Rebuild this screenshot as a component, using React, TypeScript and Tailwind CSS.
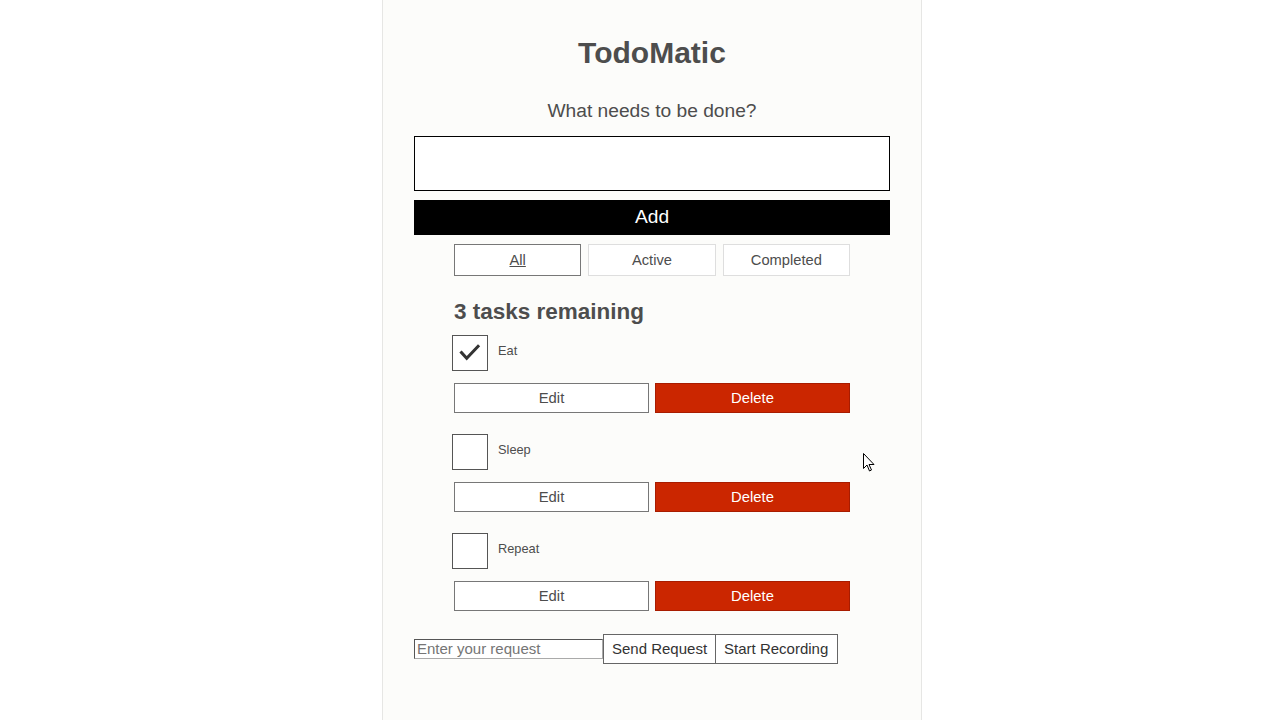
import { useState } from 'react';

type Task = { id: string; name: string; completed: boolean };

const initialTasks: Task[] = [
  { id: 'todo-0', name: 'Eat', completed: true },
  { id: 'todo-1', name: 'Sleep', completed: false },
  { id: 'todo-2', name: 'Repeat', completed: false },
];

const filters = ['All', 'Active', 'Completed'];

function TodoItem({ task, onToggle }: { task: Task; onToggle: () => void }) {
  return (
    <li className="flex flex-col">
      <div className="flex items-start">
        <button
          type="button"
          onClick={onToggle}
          className="-ml-[2px] w-9 h-9 border border-[#555] bg-white flex items-center justify-center"
          aria-pressed={task.completed}
        >
          {task.completed && (
            <svg width="36" height="36" viewBox="0 0 36 36" fill="none">
              <path
                d="M9 17.5l5.5 6L26.5 11"
                stroke="#333"
                strokeWidth="3.2"
                strokeLinecap="square"
              />
            </svg>
          )}
        </button>
        <label className="ml-[10px] pt-[8px] text-[12.8px] leading-[15px] text-[#4d4d4d]">
          {task.name}
        </label>
      </div>
      <div className="flex gap-[6px] mt-[12px]">
        <button
          type="button"
          className="flex-1 h-[30px] border border-[#777] bg-white text-[14.8px] text-[#4d4d4d]"
        >
          Edit
        </button>
        <button
          type="button"
          className="flex-1 h-[30px] border border-[#a81c00] bg-[#cb2600] text-[14.8px] text-white"
        >
          Delete
        </button>
      </div>
    </li>
  );
}

export default function App() {
  const [tasks, setTasks] = useState(initialTasks);
  const [filter, setFilter] = useState('All');

  const toggle = (id: string) =>
    setTasks(tasks.map((t) => (t.id === id ? { ...t, completed: !t.completed } : t)));

  return (
    <div
      className="relative min-h-screen bg-white pl-[382px] text-[#4d4d4d]"
      style={{ fontFamily: 'Arial, "Liberation Sans", sans-serif' }}
    >
      <div className="w-[540px] min-h-screen bg-[#fcfcfa] border-x border-[#e6e6e4] px-[31px] pt-[35px] pb-10">
        <h1 className="text-center text-[30px] leading-[35px] font-bold">TodoMatic</h1>

        <form onSubmit={(e) => e.preventDefault()}>
          <h2 className="mt-[30px] text-center text-[19.2px] leading-[22px]">
            What needs to be done?
          </h2>
          <input
            type="text"
            className="mt-[14px] block w-full h-[55px] border border-black bg-white px-4 outline-none"
          />
          <button
            type="submit"
            className="mt-[9px] block w-full h-[35px] bg-black text-white text-[19.2px]"
          >
            Add
          </button>
        </form>

        <div className="mx-10">
          <div className="mt-[9px] flex gap-[7px]">
            {filters.map((f) => (
              <button
                key={f}
                type="button"
                onClick={() => setFilter(f)}
                className={
                  f === filter
                    ? 'flex-1 h-[32px] border border-[#777] bg-white text-[14.7px] underline'
                    : 'flex-1 h-[32px] border border-[#dedede] bg-white text-[14.7px]'
                }
              >
                {f}
              </button>
            ))}
          </div>

          <h2 className="mt-[23px] text-[22.5px] leading-[26px] font-bold">3 tasks remaining</h2>

          <ul className="mt-[10px] flex flex-col gap-[21px]">
            {tasks.map((t) => (
              <TodoItem key={t.id} task={t} onToggle={() => toggle(t.id)} />
            ))}
          </ul>
        </div>

        <div className="mt-[23px] flex items-center">
          <input
            type="text"
            placeholder="Enter your request"
            className="w-[189px] h-[20px] border border-t-[#555] border-l-[#555] border-b-[#aaa] border-r-[#aaa] bg-white px-[2px] text-[15px] placeholder:text-[#757575] outline-none"
          />
          <button
            type="button"
            className="h-[30px] px-2 border border-[#666] bg-white text-[15px] text-[#333]"
          >
            Send Request
          </button>
          <button
            type="button"
            className="-ml-px h-[30px] pl-2 pr-[9px] border border-[#666] bg-white text-[15px] text-[#333]"
          >
            Start Recording
          </button>
        </div>
      </div>

      <svg
        className="absolute left-[863px] top-[453px]"
        width="12"
        height="19"
        viewBox="0 0 12 19"
      >
        <path
          d="M0.5 0.5v15l3.5-3.5 2.5 6 2-1-2.5-5.5h5z"
          fill="white"
          stroke="black"
          strokeWidth="1"
          strokeLinejoin="round"
        />
      </svg>
    </div>
  );
}
